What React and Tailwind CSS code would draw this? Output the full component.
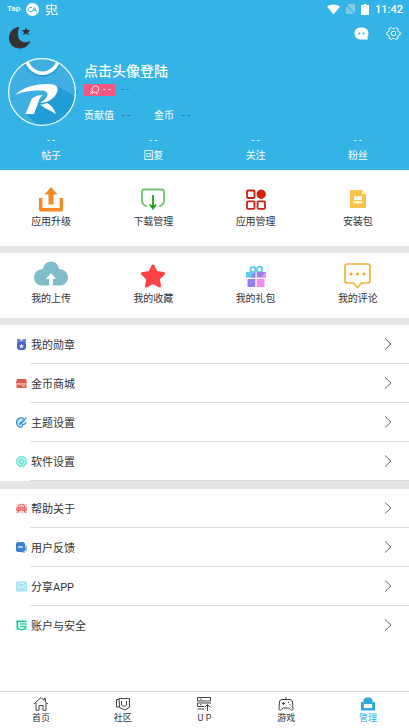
import React from "react";

const stats = ["帖子", "回复", "关注", "粉丝"];

function StatusBar() {
  return (
    <div className="flex h-[18px] items-center justify-between pl-[7px] pr-[6px] text-white">
      <div className="flex items-center gap-[6px]">
        <span className="text-[8px] leading-none font-medium">Tap</span>
        <svg width="13" height="13" viewBox="0 0 13 13">
          <circle cx="6.5" cy="6.5" r="6.5" fill="#fff" />
          <path d="M6 4.7C4.6 3.8 2.3 4.6 2.3 6.6S4.6 9.2 6 8.3M6.2 8.6 8.4 4.5 10.6 8.6M7 7.3h3" fill="none" stroke="#34b4e6" strokeWidth="1" />
        </svg>
        <svg width="13" height="13" viewBox="0 0 13 13" fill="none" stroke="#fff" strokeWidth="1.2">
          <path d="M6.500.5v7.500M2 2.500h9V6H2zM1 8.500h6M4.500 8.500c0 2-1 3.500-3.500 3.500M7 8.500V11.500h5V9.500M8.500 8h3" />
        </svg>
      </div>
      <div className="flex items-center">
        <svg width="13" height="11" viewBox="0 0 13 11" className="mr-[6px]">
          <path d="M0 2.500C3.500-.3 9.500-.3 13 2.500L6.500 10.500z" fill="#fff" />
        </svg>
        <svg width="9" height="10" viewBox="0 0 9 10" className="mr-[6px]">
          <path d="M3 0h6v10H0V3z" fill="#7fcbe8" />
          <path d="m0 1 9 9" stroke="#34b4e6" strokeWidth="1.200" />
        </svg>
        <svg width="8" height="11" viewBox="0 0 8 11" className="mr-[6px]">
          <path d="M2.500 0h3v1H8v10H0V1h2.500z" fill="#fff" />
        </svg>
        <span className="text-[11px] leading-none font-medium">11:42</span>
      </div>
    </div>
  );
}

function Avatar() {
  return (
    <svg width="68" height="68" viewBox="0 0 68 68">
      <defs>
        <clipPath id="avatar-round">
          <circle cx="34" cy="34" r="33.500" />
        </clipPath>
      </defs>
      <g clipPath="url(#avatar-round)">
        <path d="M0 0h68v68H0z" fill="#3fafe3" />
        <path d="M49 28 68 39v29H30L18 56z" fill="#209dd5" />
        <path d="M18 3c5 18 28 18 33 0" fill="none" stroke="#269fd2" strokeWidth="5" />
        <path d="M18 1c5 19 28 19 33 0" fill="none" stroke="#fff" strokeWidth="3.500" />
        <g fill="#fff">
          <path d="M7.500 37C14 29 28 26 41 26c7 0 9.500 3 8.500 7-1.200 5-6 9-11.500 11-2 .7-4.500.8-6 .5 4-2 7.500-5 7.500-8.500 0-3-4-3.500-8-3.500-8 0-17 1-24 4.500z" />
          <path d="M24 40.500c3-2.500 7-3.500 11-3.500-3 2-4 4-4.500 7L26 56h-8.500z" />
          <path d="M32 46.500c2 .3 5-.5 7-1.500 4 2 7.500 6 9 11-4-3-11-5-16-9.500z" />
        </g>
      </g>
      <circle cx="34" cy="34" r="33.400" fill="none" stroke="#fff" strokeWidth="1.200" />
    </svg>
  );
}

function Header() {
  return (
    <header className="bg-[#34b4e6] pb-[7px] text-white">
      <StatusBar />
      <div className="flex h-10 items-start justify-between pt-2 pl-[9px] pr-2">
        <button aria-label="夜间模式">
          <svg width="22" height="23" viewBox="0 0 22 23" fill="#333">
            <path d="M10.500 1C5 1 0 5.500 0 12s5 10.500 10.500 10.500c5 0 9-2.500 11-7.500-7 3.500-12.500-.500-12.500-6.500 0-3.500.600-5.500 1.500-7.500z" />
            <path d="m17 1.500 1.300 2.600 3.200.200-2.500 2 .9 3-2.900-1.700-2.800 1.700.8-3-2.400-2 3.200-.2z" />
          </svg>
        </button>
        <div className="flex items-center gap-[17px]">
          <button aria-label="消息">
            <svg width="15" height="15" viewBox="0 0 15 15">
              <path d="M7 1.500h1c4 0 6.500 2.500 6.500 6 0 1.700-.5 3-1.300 4l.8 2H7c-4 0-6.500-2.500-6.500-6s2.500-6 6.500-6z" fill="#fff" />
              <path d="M4.500 6.500h1.700v2H4.500zM8.700 6.500h1.700v2H8.700z" fill="#34b4e6" />
            </svg>
          </button>
          <button aria-label="设置">
            <svg width="15" height="15" viewBox="0 0 15 15" fill="none" stroke="#fff" strokeWidth="1">
              <path d="M5.500 1.500 6.500 2.500h2l1-1 2.500 1.300-.2 1.700 1 1.500 1.400.5v2l-1.400.5-1 1.500.2 1.700-2.500 1.300-1-1h-2l-1 1L3 12.200l.2-1.700-1-1.500L.8 8.500v-2L2.200 6l1-1.500L3 2.800z" strokeLinejoin="round" />
              <circle cx="7.500" cy="7.500" r="2.300" />
            </svg>
          </button>
        </div>
      </div>
      <div className="flex gap-2 pl-2">
        <button aria-label="头像"><Avatar /></button>
        <div>
          <h1 className="mt-1 text-[14px] leading-[18px] font-medium">点击头像登陆</h1>
          <div className="mt-1 flex items-center gap-[6px] text-[10px] leading-3">
            <span className="flex h-3 w-[31px] items-center gap-[3px] bg-[#f0567f] pl-[5px]">
              <svg width="11" height="10" viewBox="0 0 11 11" fill="none" stroke="#fff" strokeWidth="1">
                <path d="M3 6.500C2 3.500 4 1 6.500 1S10.500 3 10 5.500 7 9 4.500 8zM1 7l3 3M1 10l2.500-3M7 9l2 1" />
              </svg>
              <span className="whitespace-nowrap opacity-80">- -</span>
            </span>
            <span className="text-[#247c9f]">- -</span>
          </div>
          <div className="mt-3 flex text-[10px] leading-4">
            <span>贡献值</span>
            <span className="ml-2 text-[#216d8b]">- -</span>
            <span className="ml-6">金币</span>
            <span className="ml-2 text-[#216d8b]">- -</span>
          </div>
        </div>
      </div>
      <div className="mt-2 grid grid-cols-4 text-center text-[10px]">
        {stats.map((label) => (
          <button key={label}>
            <span className="block leading-[14px]">- -</span>
            <span className="block leading-[15px]">{label}</span>
          </button>
        ))}
      </div>
    </header>
  );
}

const UpgradeIcon = () => (
  <svg width="24" height="25" viewBox="0 0 24 25">
    <path d="M1.700 11v11.700h20.600V11" fill="none" stroke="#f68a26" strokeWidth="3.400" strokeLinejoin="round" />
    <path d="M12 0 5.500 7.500h4v10h5v-10h4z" fill="#f68a26" />
  </svg>
);
const DownloadIcon = () => (
  <svg width="24" height="22" viewBox="0 0 24 22" fill="none" strokeWidth="1.800">
    <path d="M6 18.500 3 17l-2-3V4c0-1.500.5-2.500 2-2.500h18c1.500 0 2 1 2 2.500v10l-2 3-3 1.500" stroke="#72c46f" strokeLinejoin="round" />
    <path d="M12 7v13M9 16.500l3 4 3-4" stroke="#18a11b" />
  </svg>
);
const AppsIcon = () => (
  <svg width="20" height="21" viewBox="0 0 20 21" fill="none" stroke="#cc2019" strokeWidth="1.800">
    <rect x="1" y="1.500" width="7.500" height="7.500" rx="1" />
    <rect x="1" y="12.300" width="7.500" height="7.500" rx="1" />
    <rect x="11.500" y="12.300" width="7.500" height="7.500" rx="1" />
    <circle cx="15.200" cy="5.200" r="3.800" fill="#da1d0b" />
  </svg>
);
const PackageIcon = () => (
  <svg width="16" height="20" viewBox="0 0 16 20">
    <path d="M0 1h12l4 4v14H0z" fill="#f8c34a" />
    <path d="M12 1v4h4z" fill="#ffe8a6" />
    <path d="M4 11V8.500l.5-2 2 1h3l2-1 .5 2V11z" fill="#fff" />
    <path d="M4 12h8l.5 1.500-1.500 1.500-1-1.500L9 15H7l-1-1.500L5 15l-1.500-1.500z" fill="#fff4d4" />
    <path d="M5.500 8.500h1v1h-1zM9.500 8.500h1v1h-1z" fill="#f8c34a" />
  </svg>
);
const CloudIcon = () => (
  <svg width="34" height="31" viewBox="0 0 34 31">
    <path d="M8.500 24.500C3.500 24.500 0 21 0 16.500S4 8 9 8C9.500 3.500 13 .5 17 .5S24.500 3.500 25 8c5 0 9 4 9 8.500s-3.500 8-8.500 8z" fill="#7fbdc8" />
    <path d="m17 12 5 6h-3v6.500h-4V18h-3z" fill="#fff" />
  </svg>
);
const StarIcon = () => (
  <svg width="26" height="25" viewBox="0 0 26 25">
    <path d="m13 2 3.200 6.600 7.300 1-5.300 5 1.300 7.400-6.500-3.500L6.500 22l1.300-7.400-5.300-5 7.300-1z" fill="#ff4345" stroke="#ff4345" strokeWidth="3" strokeLinejoin="round" />
  </svg>
);
const GiftIcon = () => (
  <svg width="20" height="23" viewBox="0 0 20 23">
    <g fill="none" stroke="#60c8ed" strokeWidth="1.800">
      <circle cx="7" cy="4.500" r="2.600" />
      <circle cx="13.500" cy="4.500" r="2.800" />
    </g>
    <path d="M0 7h9.300v5.500H0z" fill="#62c7ed" />
    <path d="M9.300 7v5.500H4z" fill="#9277eb" />
    <path d="M10.700 7H20v5.500h-9.300z" fill="#9b80ee" />
    <path d="M20 7v5.500h-5z" fill="#f58bea" />
    <path d="M1.500 14h7.800v8H1.500z" fill="#9580f2" />
    <path d="M10.700 14h7.800v8h-7.800z" fill="#f58bea" />
  </svg>
);
const CommentIcon = () => (
  <svg width="27" height="26" viewBox="0 0 27 26">
    <path d="M3 1h21q2 0 2 2v15q0 2-2 2h-6.500l-4 4.500-4-4.500H3q-2 0-2-2V3q0-2 2-2z" fill="none" stroke="#efb53a" strokeWidth="1.700" strokeLinejoin="round" />
    <g fill="#eea92c"><circle cx="7" cy="11" r="1.500" /><circle cx="13.500" cy="11" r="1.500" /><circle cx="20" cy="11" r="1.500" /></g>
  </svg>
);

function IconGrid({ items, className }) {
  return (
    <section className={"grid grid-cols-4 items-start " + className}>
      {items.map(({ label, Icon }) => (
        <button key={label} className="flex flex-col items-center text-[10px] leading-[14px] text-[#333]">
          <span className="flex h-8 items-center justify-center"><Icon /></span>
          {label}
        </button>
      ))}
    </section>
  );
}

const tools = [
  { label: "应用升级", Icon: UpgradeIcon },
  { label: "下载管理", Icon: DownloadIcon },
  { label: "应用管理", Icon: AppsIcon },
  { label: "安装包", Icon: PackageIcon },
];
const mine = [
  { label: "我的上传", Icon: CloudIcon },
  { label: "我的收藏", Icon: StarIcon },
  { label: "我的礼包", Icon: GiftIcon },
  { label: "我的评论", Icon: CommentIcon },
];

const MedalIcon = () => (
  <>
    <path d="M1 0h3l1.500 2L7 0h3v4H1z" fill="#6d87d8" />
    <rect x="1" y="3" width="9" height="8" rx="3" fill="#4562c8" />
    <path d="m5.500 4.500.8 1.700 1.900.2-1.400 1.300.4 1.800-1.700-.9-1.700.9.400-1.800-1.400-1.300 1.900-.2z" fill="#dce5ff" />
  </>
);
const ShopIcon = () => (
  <>
    <path d="M1 1h9l1 4H0z" fill="#dc5f4d" />
    <path d="M0 5h11v1.500H0z" fill="#f2a697" />
    <path d="M.5 6.500h10V10H.5z" fill="#dc5f4d" />
    <path d="M6 8h3" stroke="#ffd8d0" />
  </>
);
const ThemeIcon = () => (
  <>
    <path d="M8 1.500C4-.5.500 2 .500 5.500s3 5.500 5.500 4.500c1-.4 0-2 1-2.500s3 .5 3-2" fill="#bce4f8" stroke="#2382c4" strokeWidth="1.100" />
    <path d="M10.500.5 5 7 3.500 7.500 4 6z" fill="#47a5dd" stroke="#2382c4" strokeWidth=".8" />
  </>
);
const SoftIcon = () => (
  <>
    <path d="m3.500.6 2 .5 2-.5 1.500 1.400 1.300 1.500-.3 2 .3 2L9 9 7.500 10.400l-2-.5-2 .5L2 9 .7 7.500l.3-2-.3-2L2 2z" fill="#b9f5ed" stroke="#3ddbc8" strokeLinejoin="round" />
    <circle cx="5.500" cy="5.500" r="2.200" fill="none" stroke="#3ddbc8" />
  </>
);
const HelpIcon = () => (
  <>
    <path d="M0 1h11v9H0z" fill="#fbd3d1" />
    <path d="M2 5c0-5 7-5 7 0M.8 5h2v2.500h-2zM8.200 5h2v2.500h-2zM1 10l3-3h3l3 3M4 4h3v2H4z" fill="none" stroke="#e5595c" />
  </>
);
const FeedbackIcon = () => (
  <>
    <path d="M1.500 0h6q1 0 1 1v2H11v5.500L8.500 11H6l-1-1H1.500L0 8.500v-7z" fill="#a9cff3" />
    <path d="M1.500 0h6l1.500 2v6L7 10H1.500L0 8.500v-7z" fill="#3a82cf" />
    <path d="M2 5h5" stroke="#fff" strokeWidth="1.200" />
    <path d="m7 9.500 3.500-4" stroke="#3a82cf" />
  </>
);
const ShareIcon = () => (
  <>
    <rect width="11" height="10" y=".5" rx="1" fill="#a9e2f2" />
    <path d="M1 3.500 5.500 7 10 3.500M1 9l3-3M10 9 7 6M3 2.500h5" fill="none" stroke="#e5f9ff" strokeWidth=".8" />
  </>
);
const AccountIcon = () => (
  <>
    <path d="M0 0h11v10H0z" fill="#8de9d1" />
    <path d="M9.500 1.500h-8v5c0 2 2 3 4 3.500 2-.5 4-1.500 4-3.500" fill="#d9fff5" stroke="#16b992" strokeWidth="1.200" />
    <path d="M4 4h6M4 6.500h5" stroke="#16b992" strokeWidth="1.200" />
  </>
);

const firstMenu = [
  { label: "我的勋章", Icon: MedalIcon },
  { label: "金币商城", Icon: ShopIcon },
  { label: "主题设置", Icon: ThemeIcon },
  { label: "软件设置", Icon: SoftIcon },
];
const secondMenu = [
  { label: "帮助关于", Icon: HelpIcon },
  { label: "用户反馈", Icon: FeedbackIcon },
  { label: "分享APP", Icon: ShareIcon },
  { label: "账户与安全", Icon: AccountIcon, last: true },
];

function Menu({ items }) {
  return (
    <ul>
      {items.map(({ label, Icon, last }) => (
        <li key={label}>
          <button className="flex h-[38px] w-full items-center pl-4 pr-[17px] text-[#333]">
            <svg width="11" height="11" viewBox="0 0 11 11" className="mr-1 shrink-0"><Icon /></svg>
            <span className="flex-1 pt-1 text-left text-[11px] leading-4">{label}</span>
            <svg width="8" height="12" viewBox="0 0 8 12" fill="none" stroke="#666" strokeWidth="1"><path d="m1 .5 6 5.500-6 5.500" /></svg>
          </button>
          <div className={last ? "h-px" : "ml-[30px] h-px bg-[#dcdcdc]"} />
        </li>
      ))}
    </ul>
  );
}

const tabs = [
  {
    label: "首页",
    icon: <path d="M1 8 8 1.500l3 3V2.500h1.500V6L15 8M3 7v7.300h3V9.500h4v4.800h3V7" />,
  },
  {
    label: "社区",
    icon: <path d="M4 2.500h10.500v8.700L10 14l-5.500-2.500zM4 3.500H1.500V11H4M6.500 5v3c0 3 5 3 5 0V5" />,
  },
  {
    label: "U P",
    icon: <path d="M1.500 1.500h13V5h-13zM4 3.200h1.500M15 7H1.500v3.500H8M4 8.700h1.500M8 13H1.500M11.500 15V9M9 11l2.500-2.500L14 11" />,
  },
  {
    label: "游戏",
    icon: <path d="M8 1v2.500M4 3.500h8c1.500 0 2.300 1 2.500 2.500l.5 7c0 1.500-1.500 1.500-2.500.5L11 12H5l-1.500 1.500c-1 1-2.500 1-2.500-.5L1.500 6C1.700 4.500 2.500 3.500 4 3.500zM5.500 6v3M4 7.500h3M10 6.500h1M11.500 8.500h1" />,
  },
  {
    label: "管理",
    active: true,
    icon: (
      <>
        <path d="M3.500 6V3.500l2-2h5l2 2V6H15v8.500H1V6z" fill="#34a9dc" stroke="none" />
        <path d="M4 8h8v4H4z" fill="#fff" stroke="none" />
      </>
    ),
  },
];

function TabBar() {
  return (
    <nav className="mt-auto grid h-[37px] grid-cols-5 border-t border-[#cfd4d0] bg-white">
      {tabs.map(({ label, icon, active }) => (
        <button
          key={label}
          className={"flex flex-col items-center pt-1 text-[9px] leading-[13px] " + (active ? "text-[#34a9dc]" : "text-[#333]")}
        >
          <svg width="16" height="16" viewBox="0 0 16 16" fill="none" stroke="#444" strokeWidth="1">{icon}</svg>
          {label}
        </button>
      ))}
    </nav>
  );
}

export default function App() {
  return (
    <div className="flex min-h-screen flex-col bg-white font-[Roboto,'Noto_Sans_CJK_SC',sans-serif]">
      <Header />
      <main>
        <IconGrid items={tools} className="h-[76px] pt-[13px]" />
        <div className="h-[7px] bg-[#e6e6e6]" />
        <IconGrid items={mine} className="h-[65px] pt-[7px]" />
        <div className="h-[7px] bg-[#e6e6e6]" />
        <Menu items={firstMenu} />
        <div className="h-2 bg-[#e6e6e6]" />
        <Menu items={secondMenu} />
      </main>
      <TabBar />
    </div>
  );
}
